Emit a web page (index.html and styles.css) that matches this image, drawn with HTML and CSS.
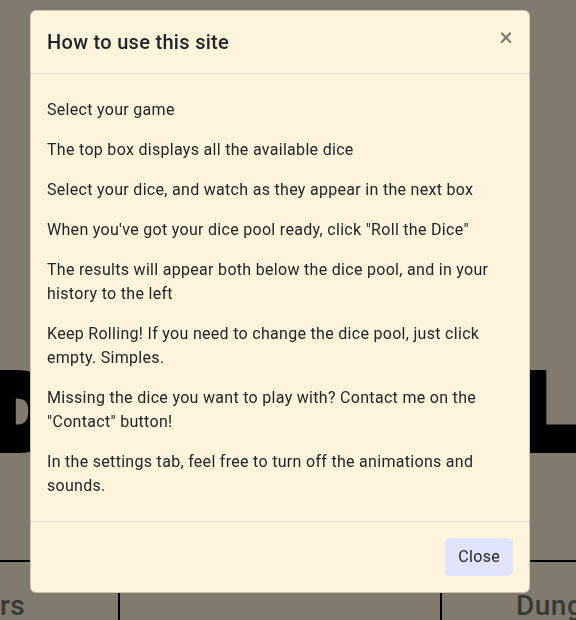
FILE: index.html
```html
<!DOCTYPE html>
<html lang="en">
<head>
<meta charset="utf-8">
<title>Dice Roller</title>
<link rel="stylesheet" href="styles.css">
</head>
<body>
<div class="page">
  <div class="hero">
    <span class="big big-d">D</span>
    <span class="big big-l">L</span>
  </div>
  <div class="table">
    <div class="cell cell-first"><span class="cell-text text-first">Players</span></div>
    <div class="cell cell-mid"></div>
    <div class="cell cell-last"><span class="cell-text text-last">Dungeons</span></div>
  </div>
</div>

<div class="modal">
  <div class="modal-header">
    <h5 class="modal-title">How to use this site</h5>
    <button class="close" type="button" aria-label="Close">×</button>
  </div>
  <div class="modal-body">
    <p>Select your game</p>
    <p>The top box displays all the available dice</p>
    <p>Select your dice, and watch as they appear in the next box</p>
    <p>When you've got your dice pool ready, click "Roll the Dice"</p>
    <p>The results will appear both below the dice pool, and in your history to the left</p>
    <p>Keep Rolling! If you need to change the dice pool, just click empty. Simples.</p>
    <p>Missing the dice you want to play with? Contact me on the "Contact" button!</p>
    <p>In the settings tab, feel free to turn off the animations and sounds.</p>
  </div>
  <div class="modal-footer">
    <button class="btn-close-modal" type="button">Close</button>
  </div>
</div>
</body>
</html>
```

FILE: styles.css
```css
html, body {
  margin: 0;
  padding: 0;
}
body {
  background: #807b6e;
  width: 576px;
  height: 620px;
  overflow: hidden;
  font-family: Roboto, "Open Sans", sans-serif;
  color: #212529;
}
.page {
  width: 576px;
  overflow: hidden;
}
.hero {
  height: 560px;
  box-sizing: border-box;
  padding-top: 365px;
  display: flex;
  align-items: flex-start;
  overflow: hidden;
}
.big {
  font-family: "Liberation Sans", Arial, sans-serif;
  font-weight: 700;
  font-size: 94px;
  line-height: 1;
  color: #000;
  -webkit-text-stroke: 18px #000;
}
.big-d {
  margin-left: -13px;
}
.big-l {
  margin-left: auto;
  margin-right: 1px;
}
.table {
  display: grid;
  grid-template-columns: 118px 322px 1fr;
  border-top: 2px solid #000;
  height: 80px;
}
.cell {
  overflow: hidden;
  white-space: nowrap;
  padding-top: 30px;
}
.cell-mid, .cell-last {
  border-left: 2px solid #000;
}
.cell-text {
  font-family: Roboto, sans-serif;
  font-weight: 500;
  font-size: 28px;
  letter-spacing: 0.5px;
  line-height: 1;
  color: #3a3936;
  display: inline-block;
}
.text-first {
  margin-left: -71px;
}
.text-last {
  margin-left: 74px;
}

.modal {
  position: fixed;
  top: 10px;
  left: 30px;
  width: 500px;
  box-sizing: border-box;
  background: #fff5dc;
  border: 1px solid rgba(0, 0, 0, 0.2);
  border-radius: 6px;
}
.modal-header {
  display: flex;
  align-items: flex-start;
  padding: 16px;
  border-bottom: 1px solid #dfe1e3;
}
.modal-title {
  margin: 0;
  font-size: 20px;
  font-weight: 500;
  letter-spacing: 0.3px;
  line-height: 30px;
  color: #212529;
}
.close {
  margin-left: auto;
  margin-top: -2px;
  padding: 0;
  border: 0;
  background: transparent;
  font-family: Lato, sans-serif;
  font-size: 24px;
  font-weight: 700;
  line-height: 1;
  color: #000;
  opacity: 0.5;
  text-shadow: 0 1px 0 #fff;
  cursor: pointer;
}
.modal-body {
  padding: 24px 16px 23px;
}
.modal-body p {
  margin: 0 0 16px;
  font-size: 16px;
  letter-spacing: 0.3px;
  line-height: 24px;
}
.modal-body p:last-child {
  margin-bottom: 0;
}
.modal-footer {
  display: flex;
  justify-content: flex-end;
  padding: 16px;
  border-top: 1px solid #dfe1e3;
}
.btn-close-modal {
  font-family: Roboto, sans-serif;
  font-size: 16px;
  letter-spacing: 0.3px;
  line-height: 24px;
  padding: 6px 12px;
  border: 1px solid transparent;
  border-radius: 5px;
  background: #e0e5fd;
  color: #212529;
  cursor: pointer;
}
```
